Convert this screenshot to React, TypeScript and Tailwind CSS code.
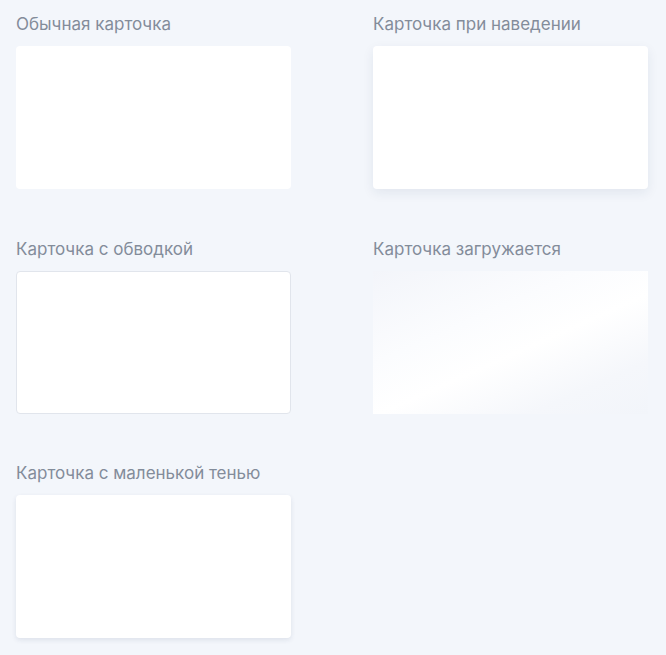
import React from 'react';

const cards = [
  { id: 'plain', label: 'Обычная карточка', className: 'bg-white rounded' },
  { id: 'hover', label: 'Карточка при наведении', className: 'bg-white rounded shadow-[0_4px_12px_rgba(30,50,90,0.08)]' },
  { id: 'outline', label: 'Карточка с обводкой', className: 'bg-white rounded border border-[#e1e5ec]' },
  {
    id: 'loading',
    label: 'Карточка загружается',
    className: 'bg-[linear-gradient(156deg,#f3f5fa_0%,#fbfcfe_35%,#ffffff_55%,#f5f7fb_80%,#f2f5fa_100%)]',
  },
  { id: 'small', label: 'Карточка с маленькой тенью', className: 'bg-white rounded shadow-[0_2px_5px_rgba(30,50,90,0.10)]' },
];

export default function App() {
  return (
    <div className="min-h-screen w-full bg-[#f3f6fb] font-['Inter','Noto_Sans',sans-serif]">
      <div className="grid grid-cols-[275px_275px] gap-x-[82px] gap-y-[47.5px] px-4 pt-3">
        {cards.map((card) => (
          <div key={card.id} className="flex flex-col">
            <span className="text-[17px] leading-6 text-[#838c9a] mb-[10px]">{card.label}</span>
            <div className={`h-[143px] ${card.className}`} />
          </div>
        ))}
      </div>
    </div>
  );
}
